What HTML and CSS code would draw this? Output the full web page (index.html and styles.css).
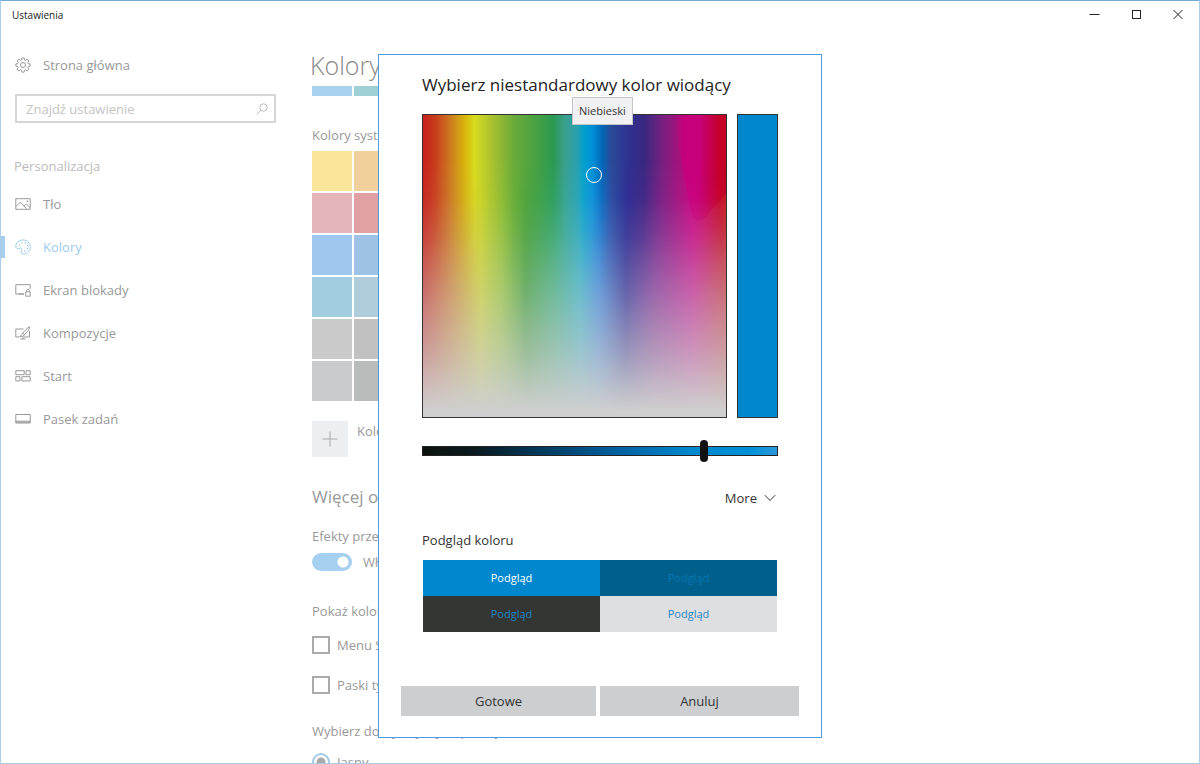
FILE: index.html
```html
<!DOCTYPE html>
<html lang="pl">
<head>
<meta charset="utf-8">
<title>Ustawienia</title>
<link rel="stylesheet" href="styles.css">
</head>
<body>
<div class="window">
  <header class="titlebar">
    <span class="titlebar-name">Ustawienia</span>
    <div class="window-controls">
      <button type="button" aria-label="Minimalizuj"><svg width="12" height="12" viewBox="0 0 12 12"><path d="M1.500 5.500h10"/></svg></button>
      <button type="button" aria-label="Maksymalizuj"><svg width="12" height="12" viewBox="0 0 12 12"><rect x="2.500" y="1.500" width="8" height="8"/></svg></button>
      <button type="button" aria-label="Zamknij"><svg width="12" height="12" viewBox="0 0 12 12"><path d="M1.500 1l9 9M10.500 1l-9 9"/></svg></button>
    </div>
  </header>

  <div class="settings">
    <nav class="sidebar">
      <a class="nav-item home" href="#home">
        <svg class="icon" viewBox="0 0 16 16"><circle cx="8" cy="8" r="2.500"/><path d="M6.800 1h2.400l.3 1.900 1.100.5 1.600-1.200 1.700 1.700-1.200 1.600.5 1.200 1.900.2v2.300l-1.900.3-.5 1.100 1.200 1.600-1.700 1.700-1.600-1.200-1.100.5-.3 1.900H6.800l-.3-1.900-1.100-.5-1.600 1.200-1.700-1.700 1.200-1.600-.5-1.100L.9 9.200V6.900l1.900-.2.5-1.200-1.200-1.600 1.700-1.700 1.600 1.200 1.100-.5z"/></svg>
        Strona główna
      </a>
      <label class="search">
        <input type="search" placeholder="Znajdź ustawienie" aria-label="Znajdź ustawienie">
        <svg width="12" height="12" viewBox="0 0 12 12"><circle cx="7.500" cy="4.500" r="3.700"/><path d="M4.900 7.200L.8 11.300"/></svg>
      </label>
      <h2 class="section-name">Personalizacja</h2>
      <ul class="nav-list">
        <li><a class="nav-item" href="#background"><svg class="icon" viewBox="0 0 16 16"><path d="M.8 2.700h14.400v10.600H.8zM1 10.500l4.200-4.200 6.500 6.500M9 10.200l2.300-2.300 3.800 3.700"/><circle cx="12.300" cy="5.300" r=".5"/></svg>Tło</a></li>
        <li><a class="nav-item active" href="#colors"><svg class="icon" viewBox="0 0 16 16"><path d="M1 5.500C2.400 2.300 5.300.8 8.300.9c3.900.2 6.900 3.200 6.900 7 0 4-3 7.200-6.500 7.200-2.400 0-2.900-1.800-2.200-3.200.6-1.300.5-2.600-.8-2.900-1-.3-1.600.7-2.500.7C1.100 9.700.3 7.300 1 5.500z"/><path stroke-width="1.300" d="M3.800 6.200h1.300M6.200 3.800h1.300M9.600 3.800h1.300M11.900 6.500h1.300M11.700 9.700H13M9.100 12h1.300"/></svg>Kolory</a></li>
        <li><a class="nav-item" href="#lock"><svg class="icon" viewBox="0 0 16 16"><path d="M9 12H.8V2.700h14.400v4.100M3.500 12H9M10.700 9.800h4.500v4.400h-4.500zM11.600 9.800V8.600c0-1.800 2.700-1.800 2.700 0v1.200"/></svg>Ekran blokady</a></li>
        <li><a class="nav-item" href="#themes"><svg class="icon" viewBox="0 0 16 16"><path d="M8.500 4H.8v8h3.700M9 12h5.500V5.800M5.500 14h5M8 12v2M14.800 1.800c-2.200.7-5.500 4.100-6.900 6.500l1.400 1.300c2.300-1.700 5.200-5.500 5.500-7.800zM7.900 8.300c-1.400.1-1.600 1.200-1.900 2.200-.2.600-.7.800-1.200.9 1.900.7 4.500.1 4.500-1.800"/></svg>Kompozycje</a></li>
        <li><a class="nav-item" href="#start"><svg class="icon" viewBox="0 0 16 16"><path d="M.8 2.700h8.400v4H.8zM11 2.700h4.200v4H11zM.8 8.700H5v4.200H.8zM6.900 8.700h8.300v4.200H6.900z"/></svg>Start</a></li>
        <li><a class="nav-item" href="#taskbar"><svg class="icon" viewBox="0 0 16 16"><path d="M.8 3.500h14.400v8.500H.8zM.8 10.200h14.400M.8 11.200h14.400"/></svg>Pasek zadań</a></li>
      </ul>
    </nav>

    <main class="content">
      <h1>Kolory</h1>
      <div class="swatches recent"><span class="swatch sky"></span><span class="swatch aqua"></span></div>
      <h3>Kolory systemu</h3>
      <div class="swatches palette">
        <span class="swatch yellow"></span><span class="swatch orange"></span>
        <span class="swatch pink"></span><span class="swatch rose"></span>
        <span class="swatch blue"></span><span class="swatch cobalt"></span>
        <span class="swatch cyan"></span><span class="swatch steel"></span>
        <span class="swatch gray"></span><span class="swatch stone"></span>
        <span class="swatch silver"></span><span class="swatch slate"></span>
      </div>
      <div class="custom">
        <button type="button" class="add" aria-labelledby="custom-label"><svg width="16" height="16" viewBox="0 0 16 16"><path d="M8 .5v15M.5 8h15"/></svg></button>
        <span id="custom-label">Kolor</span>
      </div>
      <h2>Więcej opcji</h2>
      <h3 id="effects">Efekty przezr.</h3>
      <label class="option toggle-row"><input class="toggle" type="checkbox" role="switch" checked aria-describedby="effects">Wł.</label>
      <h3 class="show-color">Pokaż kolor</h3>
      <label class="option"><input class="check" type="checkbox">Menu Start</label>
      <label class="option"><input class="check" type="checkbox">Paski tyt.</label>
      <h3 class="mode">Wybierz domyślny tryb aplikacji</h3>
      <label class="option radio-row"><input class="radio" type="radio" name="mode" checked>Jasny</label>
    </main>
  </div>

  <div class="overlay">
    <section class="dialog" role="dialog" aria-labelledby="dialog-title">
      <div class="dialog-body">
        <h2 id="dialog-title">Wybierz niestandardowy kolor wiodący</h2>
        <div class="picker">
          <div class="spectrum"><span class="wedge"></span><span class="fade"></span><span class="cursor"></span></div>
          <div class="current"></div>
          <span class="tooltip" role="tooltip">Niebieski</span>
        </div>
        <input class="brightness" type="range" min="0" max="100" value="80" aria-label="Jasność">
        <button type="button" class="more">More <svg width="12" height="8" viewBox="0 0 12 8"><path d="M.8 1.200L6 6.400l5.200-5.200"/></svg></button>
        <h3>Podgląd koloru</h3>
        <div class="preview">
          <span class="tile accent">Podgląd</span>
          <span class="tile deep">Podgląd</span>
          <span class="tile dark">Podgląd</span>
          <span class="tile light">Podgląd</span>
        </div>
      </div>
      <div class="actions">
        <button type="button">Gotowe</button>
        <button type="button">Anuluj</button>
      </div>
    </section>
  </div>
</div>
</body>
</html>
```
FILE: styles.css
```css
* { box-sizing: border-box; }

body {
  margin: 0;
  font: 13px/20px "Open Sans", "Noto Sans", sans-serif;
  color: #999;
  background: #fff;
}

h1, h2, h3, ul { margin: 0; padding: 0; font-weight: 400; }
ul { list-style: none; }
button, input { font: inherit; color: inherit; margin: 0; }
button { padding: 0; border: 0; background: none; }
svg { fill: none; stroke: currentColor; stroke-width: 1; flex: none; }

.window {
  position: relative;
  height: 100vh;
  overflow: hidden;
  display: flex;
  flex-direction: column;
  border: 1px solid #a8cdeb;
  border-top-color: #76abd8;
}

.titlebar {
  display: flex;
  justify-content: space-between;
  align-items: center;
  flex: none;
  height: 28px;
  padding-left: 11px;
  font-size: 10px;
  color: #222;
}
.window-controls { display: flex; }
.window-controls button {
  display: grid;
  place-items: center;
  width: 42px;
  height: 28px;
}

.settings { display: flex; flex: 1; min-height: 0; }

.sidebar { width: 275px; flex: none; }
.nav-item {
  display: flex;
  align-items: center;
  gap: 12px;
  height: 43px;
  padding-left: 14px;
  color: #999;
  text-decoration: none;
}
.icon { width: 16px; height: 16px; }
.home { margin-top: 14px; }
.search {
  display: flex;
  align-items: center;
  height: 29px;
  margin: 8px 0 0 14px;
  padding: 0 6px 0 9px;
  border: 2px solid #d6d6d6;
  color: #bbb;
}
.search input {
  flex: 1;
  min-width: 0;
  height: 20px;
  padding: 0;
  border: 0;
  outline: 0;
  background: none;
}
.search input::placeholder { color: #c4c4c4; }
.section-name {
  margin: 33px 0 6px 13px;
  font-size: 13px;
  color: #bbb;
}
.nav-item.active {
  color: #9ccbee;
  background: linear-gradient(#a6cfee, #a6cfee) left center / 4px 22px no-repeat;
}

.content { flex: 1; padding-left: 36px; overflow: hidden; }
.content h1 {
  margin: 20px 0 0 -2px;
  font-size: 25px;
  line-height: 32px;
  font-weight: 300;
  color: #888;
}
.content h2 { margin-top: 28px; font-size: 17px; line-height: 24px; }
.content h3 { font-size: 13px; }

.swatches {
  display: grid;
  grid-template-columns: repeat(2, 40px);
  grid-auto-rows: 40px;
  gap: 2px;
}
.recent { grid-auto-rows: 10px; margin: 5px 0 29px; }
.palette { margin-top: 6px; }
.sky { background: #a8d2f0; }
.aqua { background: #9fd0d6; }
.yellow { background: #f9e69a; }
.orange { background: #f0d09c; }
.pink { background: #e6b5ba; }
.rose { background: #e0a0a4; }
.blue { background: #9fc8ee; }
.cobalt { background: #9ec2e6; }
.cyan { background: #a0cde0; }
.steel { background: #b0cddc; }
.gray { background: #cacaca; }
.stone { background: #c0c1c0; }
.silver { background: #c8cccf; }
.slate { background: #b8bcbb; }

.custom { display: flex; gap: 9px; margin-top: 20px; }
.add {
  display: grid;
  place-items: center;
  width: 36px;
  height: 36px;
  background: #eceef0;
  color: #aaa;
}

.content h2 + h3 { margin-top: 17px; }
.option {
  display: flex;
  align-items: center;
  gap: 7px;
  height: 20px;
  margin-top: 20px;
}
.option input { appearance: none; flex: none; }
.toggle-row { gap: 11px; margin-top: 6px; }
.toggle {
  width: 40px;
  height: 18px;
  border-radius: 9px;
  background: radial-gradient(circle at 31px 9px, #fff 5px, #a6d0ef 6px);
}
.show-color { margin-top: 29px; }
.show-color + .option { margin-top: 14px; }
.check { width: 18px; height: 18px; border: 2px solid #aaa; }
.mode { margin-top: 26px; }
.radio-row { margin-top: 11px; }
.radio {
  width: 18px;
  height: 18px;
  border: 2px solid #a3cbe8;
  border-radius: 50%;
  background: radial-gradient(circle, #aaa 4px, #fff 5px);
}

/* Modal colour picker */
.overlay {
  position: absolute;
  inset: 28px 0 0;
  display: grid;
  place-items: center;
}
.dialog {
  width: 444px;
  padding: 18px 22px 21px;
  border: 1px solid #4f9be0;
  background: #fff;
  color: #333;
}
.dialog-body { padding: 0 21px; }
.dialog-body h2 {
  font-size: 17px;
  line-height: 24px;
  white-space: nowrap;
  color: #222;
}
.picker {
  position: relative;
  display: flex;
  gap: 10px;
  height: 304px;
  margin-top: 17px;
}
.spectrum, .current { border: 1px solid #333; }
.spectrum {
  position: relative;
  flex: 1;
  background: linear-gradient(to right,
    #c83c38 0%, #cf8440 9%, #d0d438 19%, #98c83c 26%, #3ea03a 34%,
    #40b080 43%, #38b4cc 52%, #3c88e0 58%, #302c98 67%, #803098 76%,
    #c82898 89%, #c84048 100%);
}
.spectrum::before {
  content: "";
  position: absolute;
  inset: 0;
  background: linear-gradient(to right,
    #c8201c 0%, #c83c1c 4%, #cc7a20 9%, #d8b80c 14%, #d8dc1e 17%,
    #a8c030 23%, #6aab3a 30%, #45a044 38%, #2a9a52 43%, #3a9f90 47%,
    #28a0b0 51%, #00a0cc 53%, #0090d8 56%, #0068b8 59%, #2a4a98 62%,
    #303090 68%, #382880 73%, #782080 79%, #a8107c 85%, #c8007c 89%,
    #c80060 93%, #c40020 98%, #c41018 100%);
  mask-image: linear-gradient(#000 15%, transparent 60%);
}
.wedge {
  position: absolute;
  inset: 0;
  background: linear-gradient(to right, transparent 83%, #c8007c 87%, #c8007c 91%, #c40028 98%);
  clip-path: polygon(83% 0, 100% 0, 100% 26%, 93% 34%, 91% 35%, 89% 34%, 86% 20%);
  mask-image: linear-gradient(#000 15%, rgb(0 0 0 / 40%) 35%);
}
.fade {
  position: absolute;
  inset: 0;
  background: linear-gradient(transparent 28%, rgb(207 207 207 / 10%) 40%, rgb(207 207 207 / 36%) 60%, rgb(207 207 207 / 68%) 80%, #cfcfcf 98%);
}
.cursor {
  position: absolute;
  left: 163px;
  top: 52px;
  width: 16px;
  height: 16px;
  border: 1px solid #fff;
  border-radius: 50%;
}
.current { width: 41px; background: #0087cd; }
.tooltip {
  position: absolute;
  left: 150px;
  top: -17px;
  padding: 2px 6px;
  border: 1px solid #c4c4c4;
  background: #f1f1f3;
  font-size: 11px;
  line-height: 22px;
  color: #333;
}

.brightness {
  appearance: none;
  display: block;
  width: 100%;
  height: 22px;
  margin-top: 22px;
  background: none;
}
.brightness::-webkit-slider-runnable-track {
  height: 10px;
  border: 1px solid #222;
  background: linear-gradient(to right, #0c130c, #0a1a20 15%, #003a5c 33%, #0060a0 55%, #0087cd 75%, #0090d8 92%, #2a98dc);
}
.brightness::-webkit-slider-thumb {
  appearance: none;
  width: 8px;
  height: 22px;
  margin-top: -7px;
  border-radius: 4px;
  background: #111;
}

.more {
  display: flex;
  align-items: center;
  gap: 7px;
  margin: 26px 2px 0 auto;
}
.dialog-body h3 { margin-top: 22px; font-size: 13px; }
.preview {
  display: grid;
  grid-template-columns: 1fr 1fr;
  grid-auto-rows: 36px;
  margin: 10px 1px 0;
  font-size: 11px;
}
.tile { display: grid; place-items: center; color: #1f86c4; }
.tile.accent { background: #0087cd; color: #fff; }
.tile.deep { background: #005f8b; color: #0078b4; }
.tile.dark { background: #333633; }
.tile.light { background: #dedfe1; }

.actions {
  display: grid;
  grid-template-columns: 195fr 199fr;
  gap: 4px;
  margin-top: 54px;
}
.actions button { height: 30px; background: #cdcecf; }
```
